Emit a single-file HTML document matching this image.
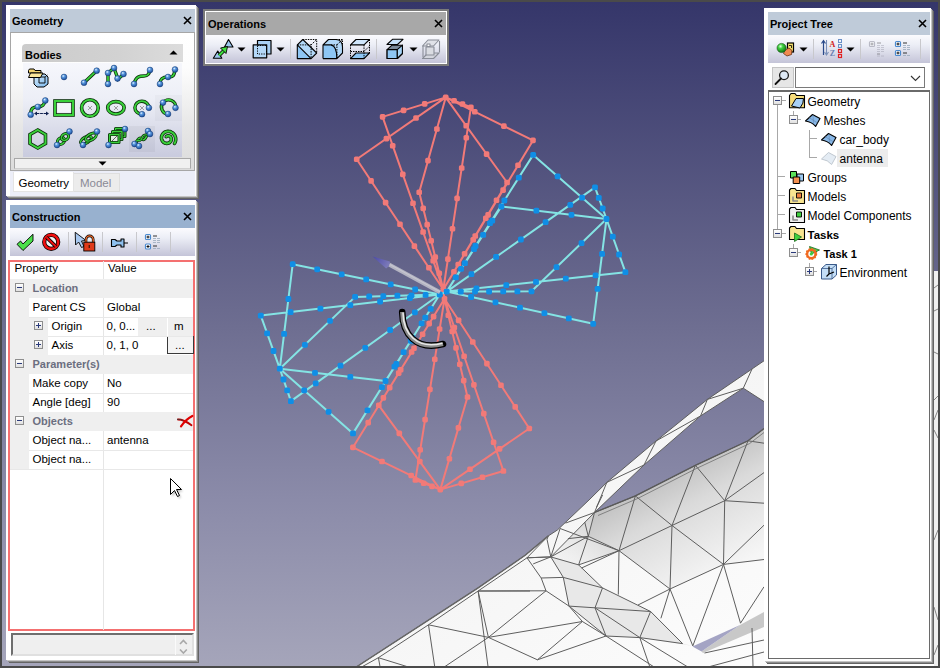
<!DOCTYPE html>
<html><head><meta charset="utf-8">
<style>
*{box-sizing:border-box;margin:0;padding:0}
html,body{width:940px;height:668px;overflow:hidden;background:#4a4a4a;font-family:"Liberation Sans",sans-serif;color:#000}
.abs{position:absolute}
#vp{position:absolute;left:2px;top:2px;width:936px;height:664px;background:linear-gradient(#35366a 0%,#6e6e91 49%,#8b8ba9 75%,#a5a5ba 100%);overflow:hidden}
.panel{position:absolute;background:#fff;box-shadow:1px 1px 0 #c4c4c4,2px 2px 0 #8c8c8c,3px 3px 0 #646464}
.title{position:absolute;font-weight:bold;font-size:11px;line-height:23px;padding-left:2px;padding-top:1px}
.close{position:absolute;width:9px;height:9px}
.tb{position:absolute;background:linear-gradient(#fbfbfe 0%,#eceef6 35%,#c4c4d8 100%)}
.sep{position:absolute;width:1px;background:#c8c8cc}
.dd{position:absolute;width:0;height:0;border-left:4px solid transparent;border-right:4px solid transparent;border-top:4px solid #000}
.t12{font-size:12px}
.tr{position:absolute;font-size:12px;line-height:14px;white-space:nowrap}
.tt{position:absolute;font-size:11.5px;line-height:14px;white-space:nowrap}
.tb2{position:absolute;font-size:11px;line-height:14px;font-weight:bold;color:#6b6e80;white-space:nowrap}
.bx{width:9px;height:9px;border:1px solid #8e8e8e;background:linear-gradient(#fff,#e0e0e0)}
.bx::after{content:"";position:absolute;left:1px;top:3px;width:5px;height:1px;background:#2a3a7a}
.plus::before{content:"";position:absolute;left:3px;top:1px;width:1px;height:5px;background:#2a3a7a}

</style></head><body>
<div id="vp">
<svg id="scene" class="abs" style="left:-2px;top:-2px" width="940" height="668" viewBox="0 0 940 668">
<!--SCENE-->
<defs><linearGradient id="mg" x1="0" y1="0" x2="1" y2="1"><stop offset="0" stop-color="#ececec"/><stop offset="0.5" stop-color="#f6f6f6"/><stop offset="1" stop-color="#ffffff"/></linearGradient><linearGradient id="bgc" gradientUnits="userSpaceOnUse" x1="0" y1="2" x2="0" y2="666"><stop offset="0" stop-color="#35366a"/><stop offset="0.49" stop-color="#6e6e91"/><stop offset="0.75" stop-color="#8b8ba9"/><stop offset="1" stop-color="#a5a5ba"/></linearGradient></defs>
<polygon points="357.0,666.5 478.5,587.6 525.5,555.0 548.3,535.9 557.4,530.0 589.0,500.0 606.8,482.4 656.0,441.0 707.4,399.4 764.0,360.8 938.0,271.0 938.0,666.5" fill="url(#mg)"/>
<polygon points="550.8,556.9 578.6,564.9 602.5,587.9 650.6,611.5 682.6,643.6 692.8,645.9 639.8,637.6 606.0,636.0 569.0,606.1 563.3,577.4" fill="#e8e8e8"/>
<defs><linearGradient id="topsh" gradientUnits="userSpaceOnUse" x1="680" y1="472" x2="731" y2="570"><stop offset="0" stop-color="#c4c4c4"/><stop offset="0.3" stop-color="#dadada"/><stop offset="1" stop-color="#f6f6f6"/></linearGradient><linearGradient id="jsh" gradientUnits="userSpaceOnUse" x1="594" y1="514" x2="560" y2="560"><stop offset="0" stop-color="#d0d0d0"/><stop offset="1" stop-color="#e8e8e8" stop-opacity="0.3"/></linearGradient></defs>
<polygon points="594.5,512.5 635.4,495.9 695.4,465.3 748,440.8 764,428.6 764,559.5 723.5,564.4 670,589 619,550.7 588.3,536.3" fill="url(#topsh)"/>
<polygon points="594.5,512.5 588.3,536.3 619,550.7 578.6,564.9 550.8,556.9" fill="url(#jsh)"/>
<rect x="934" y="271" width="4" height="396" fill="#f0f0f0"/>
<polygon points="594.5,512.5 644.0,465.0 700.6,415.9 743.3,388.2 764.0,401.6 764.0,428.6 748.0,440.8 695.4,465.3 635.4,495.9" fill="url(#bgc)"/>
<polygon points="701.5,651.5 740,625 764,612 764,627 703,653" fill="#c8c8c8"/>
<polygon points="692.5,646.5 740,625 701.5,651.5" fill="#a4a4c4"/>
<path d="M362.5,666.5 L378.4,657.7 L428.5,624.8 L478.1,591.0 L527.0,557.8 L548.3,535.9 L557.4,530.0 L589.0,500.0 L606.8,482.4 L656.0,441.0 L707.4,399.4 L764.0,360.8 M357.0,666.5 L478.5,587.6 L525.5,555.0 L548.3,535.9 M594.5,512.5 L644.0,465.0 L700.6,415.9 L743.3,388.2 L764.0,401.6 M764.0,428.6 L748.0,440.8 L695.4,465.3 L635.4,495.9 L594.5,512.5 M478.1,591.0 L530.0,591.0 M478.1,591.0 L488.4,637.4 M428.5,624.8 L488.4,637.4 M428.5,624.8 L434.7,666.5 M488.4,637.4 L445.0,666.5 M488.4,637.4 L546.0,590.8 M488.4,637.4 L582.4,621.5 M488.4,637.4 L537.4,659.8 M378.4,657.7 L380.0,666.5 M378.4,657.7 L406.8,666.5 M527.0,557.8 L550.8,556.9 L578.6,564.9 L602.5,587.9 L650.6,611.5 L682.6,643.6 M527.0,557.8 L541.2,578.0 L546.0,590.8 L569.0,606.1 L606.0,636.0 L653.3,666.5 M541.2,578.0 L563.3,577.4 L550.8,556.9 M563.3,577.4 L569.0,606.1 M563.3,577.4 L602.5,587.9 M569.0,606.1 L595.0,607.8 L650.6,611.5 M602.5,587.9 L595.0,607.8 L606.0,636.0 M595.0,607.8 L639.8,637.6 L606.0,636.0 M650.6,611.5 L639.8,637.6 L682.6,643.6 M639.8,637.6 L649.7,666.5 M639.8,637.6 L687.0,666.5 M478.1,591.0 L546.0,590.8 M582.4,621.5 L606.0,636.0 M582.4,621.5 L537.4,659.8 M582.4,621.5 L569.0,606.1 M635.4,495.9 L672.0,525.5 L695.4,465.3 L724.7,500.7 L748.0,440.8 M672.0,525.5 L724.7,500.7 M635.4,495.9 L619.0,550.7 L672.0,525.5 M619.0,550.7 L618.3,594.6 M619.0,550.7 L581.6,568.0 M619.0,550.7 L560.1,528.5 M672.0,525.5 L670.0,589.0 M672.0,525.5 L723.5,564.4 L724.7,500.7 M724.7,500.7 L764.0,472.6 M724.7,500.7 L764.0,503.2 M723.5,564.4 L764.0,525.2 M723.5,564.4 L764.0,559.5 M670.0,589.0 L723.5,564.4 M670.0,589.0 L692.8,645.9 L723.5,564.4 M723.5,564.4 L740.5,623.2 M670.0,589.0 L660.9,618.3 M670.0,589.0 L638.0,605.0 M619.0,550.7 L670.0,589.0 M740.5,623.2 L764.0,586.8 M560.1,528.5 L550.8,556.9 M594.5,512.5 L550.8,556.9 M594.5,512.5 L565.5,523.1 M594.5,512.5 L588.3,536.3 L619.0,550.7 M584.7,522.0 L588.3,536.3 M567.9,538.7 L588.3,536.3 M550.8,556.9 L588.3,536.3 M588.3,536.3 L578.6,564.9 M578.6,564.9 L619.0,550.7 M547.0,539.3 L550.8,556.9 M527.0,557.8 L550.8,556.9 M533.2,563.9 L550.8,556.9 M548.3,535.9 L547.0,539.3 M596.6,507.0 L602.6,495.0 M606.8,482.4 L594.5,512.5 M606.8,482.4 L644.0,465.0 M656.0,441.0 L644.0,465.0 M656.0,441.0 L700.6,415.9 M707.4,399.4 L700.6,415.9 M707.4,399.4 L743.3,388.2 M752.0,369.0 L743.3,388.2 M748.0,440.8 L764.0,443.2 M704.5,653.0 L764.0,640.0 M752.0,628.0 L753.0,666.5 M710.0,666.5 L764.0,652.0 M478.1,591.0 L488.0,666.5 M537.4,659.8 L606.0,636.0" fill="none" stroke="#5e5e5e" stroke-width="1" stroke-linejoin="round"/>
<path d="M357,666.5 L478.5,587.6 L525.5,555 L548.3,535.9" fill="none" stroke="#666" stroke-width="1.4"/>
<path d="M594.5,512.5 L635.4,495.9 L695.4,465.3 L748,440.8 L764,428.6" fill="none" stroke="#5a5a5a" stroke-width="1.3"/>
<path d="M598,515.5 L637,498.8 L697,468.2 L749.5,443.6 L764,432.5" fill="none" stroke="#707070" stroke-width="0.8"/>
<path d="M934,288 L938,285 M934,311 L938,309 M934,352 L938,354 M934,400 L938,396 M934,420 L938,410 M934,430 L938,438 M934,540 L938,530 M934,607 L938,620 M934,655 L938,645" stroke="#6a6a6a" stroke-width="0.8"/>
<path d="M445.7,97.4 L356.7,159.2 L443.3,289.5 M445.7,97.4 L382.6,116.9 L443.3,289.5 M445.7,97.4 L533.0,140.4 L443.3,289.5 M445.7,97.4 L507.1,182.5 L443.3,289.5 M445.7,97.4 L419.2,192.2 L443.3,289.5 M445.7,97.4 L470.9,107.3 L443.3,289.5 M440.3,489.6 L352.9,447.4 L444.5,298.8 M440.3,489.6 L378.8,405.3 L444.5,298.8 M440.3,489.6 L529.3,428.5 L444.5,298.8 M440.3,489.6 L503.4,471.0 L444.5,298.8 M440.3,489.6 L415.4,480.0 L444.5,298.8 M440.3,489.6 L467.5,397.0 L444.5,298.8 M443.3,289.5 L444.5,298.8" fill="none" stroke="#f27a78" stroke-width="2" stroke-linejoin="round"/>
<g fill="#f27a78"><rect x="442.9" y="94.6" width="5.6" height="5.6" rx="1.6"/><rect x="440.5" y="286.7" width="5.6" height="5.6" rx="1.6"/><rect x="353.9" y="156.4" width="5.6" height="5.6" rx="1.6"/><rect x="383.6" y="135.8" width="5.6" height="5.6" rx="1.6"/><rect x="413.2" y="115.2" width="5.6" height="5.6" rx="1.6"/><rect x="368.3" y="178.1" width="5.6" height="5.6" rx="1.6"/><rect x="382.8" y="199.8" width="5.6" height="5.6" rx="1.6"/><rect x="397.2" y="221.5" width="5.6" height="5.6" rx="1.6"/><rect x="411.6" y="243.3" width="5.6" height="5.6" rx="1.6"/><rect x="426.1" y="265.0" width="5.6" height="5.6" rx="1.6"/><rect x="379.8" y="114.1" width="5.6" height="5.6" rx="1.6"/><rect x="400.8" y="107.6" width="5.6" height="5.6" rx="1.6"/><rect x="421.9" y="101.1" width="5.6" height="5.6" rx="1.6"/><rect x="389.9" y="142.9" width="5.6" height="5.6" rx="1.6"/><rect x="400.0" y="171.6" width="5.6" height="5.6" rx="1.6"/><rect x="410.2" y="200.4" width="5.6" height="5.6" rx="1.6"/><rect x="420.3" y="229.2" width="5.6" height="5.6" rx="1.6"/><rect x="430.4" y="257.9" width="5.6" height="5.6" rx="1.6"/><rect x="530.2" y="137.6" width="5.6" height="5.6" rx="1.6"/><rect x="501.1" y="123.3" width="5.6" height="5.6" rx="1.6"/><rect x="472.0" y="108.9" width="5.6" height="5.6" rx="1.6"/><rect x="515.2" y="162.4" width="5.6" height="5.6" rx="1.6"/><rect x="500.3" y="187.3" width="5.6" height="5.6" rx="1.6"/><rect x="485.3" y="212.1" width="5.6" height="5.6" rx="1.6"/><rect x="470.4" y="237.0" width="5.6" height="5.6" rx="1.6"/><rect x="455.4" y="261.8" width="5.6" height="5.6" rx="1.6"/><rect x="504.3" y="179.7" width="5.6" height="5.6" rx="1.6"/><rect x="483.8" y="151.3" width="5.6" height="5.6" rx="1.6"/><rect x="463.4" y="123.0" width="5.6" height="5.6" rx="1.6"/><rect x="493.7" y="197.5" width="5.6" height="5.6" rx="1.6"/><rect x="483.0" y="215.4" width="5.6" height="5.6" rx="1.6"/><rect x="472.4" y="233.2" width="5.6" height="5.6" rx="1.6"/><rect x="461.8" y="251.0" width="5.6" height="5.6" rx="1.6"/><rect x="451.1" y="268.9" width="5.6" height="5.6" rx="1.6"/><rect x="416.4" y="189.4" width="5.6" height="5.6" rx="1.6"/><rect x="425.2" y="157.8" width="5.6" height="5.6" rx="1.6"/><rect x="434.1" y="126.2" width="5.6" height="5.6" rx="1.6"/><rect x="420.4" y="205.6" width="5.6" height="5.6" rx="1.6"/><rect x="424.4" y="221.8" width="5.6" height="5.6" rx="1.6"/><rect x="428.4" y="238.0" width="5.6" height="5.6" rx="1.6"/><rect x="432.5" y="254.3" width="5.6" height="5.6" rx="1.6"/><rect x="436.5" y="270.5" width="5.6" height="5.6" rx="1.6"/><rect x="468.1" y="104.5" width="5.6" height="5.6" rx="1.6"/><rect x="459.7" y="101.2" width="5.6" height="5.6" rx="1.6"/><rect x="451.3" y="97.9" width="5.6" height="5.6" rx="1.6"/><rect x="463.5" y="134.9" width="5.6" height="5.6" rx="1.6"/><rect x="458.9" y="165.2" width="5.6" height="5.6" rx="1.6"/><rect x="454.3" y="195.6" width="5.6" height="5.6" rx="1.6"/><rect x="449.7" y="226.0" width="5.6" height="5.6" rx="1.6"/><rect x="445.1" y="256.3" width="5.6" height="5.6" rx="1.6"/><rect x="437.5" y="486.8" width="5.6" height="5.6" rx="1.6"/><rect x="441.7" y="296.0" width="5.6" height="5.6" rx="1.6"/><rect x="350.1" y="444.6" width="5.6" height="5.6" rx="1.6"/><rect x="379.2" y="458.7" width="5.6" height="5.6" rx="1.6"/><rect x="408.4" y="472.7" width="5.6" height="5.6" rx="1.6"/><rect x="365.4" y="419.8" width="5.6" height="5.6" rx="1.6"/><rect x="380.6" y="395.1" width="5.6" height="5.6" rx="1.6"/><rect x="395.9" y="370.3" width="5.6" height="5.6" rx="1.6"/><rect x="411.2" y="345.5" width="5.6" height="5.6" rx="1.6"/><rect x="426.4" y="320.8" width="5.6" height="5.6" rx="1.6"/><rect x="376.0" y="402.5" width="5.6" height="5.6" rx="1.6"/><rect x="396.5" y="430.6" width="5.6" height="5.6" rx="1.6"/><rect x="417.0" y="458.7" width="5.6" height="5.6" rx="1.6"/><rect x="386.9" y="384.8" width="5.6" height="5.6" rx="1.6"/><rect x="397.9" y="367.0" width="5.6" height="5.6" rx="1.6"/><rect x="408.8" y="349.2" width="5.6" height="5.6" rx="1.6"/><rect x="419.8" y="331.5" width="5.6" height="5.6" rx="1.6"/><rect x="430.8" y="313.8" width="5.6" height="5.6" rx="1.6"/><rect x="526.5" y="425.7" width="5.6" height="5.6" rx="1.6"/><rect x="496.8" y="446.1" width="5.6" height="5.6" rx="1.6"/><rect x="467.2" y="466.4" width="5.6" height="5.6" rx="1.6"/><rect x="512.4" y="404.1" width="5.6" height="5.6" rx="1.6"/><rect x="498.2" y="382.5" width="5.6" height="5.6" rx="1.6"/><rect x="484.1" y="360.8" width="5.6" height="5.6" rx="1.6"/><rect x="470.0" y="339.2" width="5.6" height="5.6" rx="1.6"/><rect x="455.8" y="317.6" width="5.6" height="5.6" rx="1.6"/><rect x="500.6" y="468.2" width="5.6" height="5.6" rx="1.6"/><rect x="479.6" y="474.4" width="5.6" height="5.6" rx="1.6"/><rect x="458.5" y="480.6" width="5.6" height="5.6" rx="1.6"/><rect x="490.8" y="439.5" width="5.6" height="5.6" rx="1.6"/><rect x="481.0" y="410.8" width="5.6" height="5.6" rx="1.6"/><rect x="471.1" y="382.1" width="5.6" height="5.6" rx="1.6"/><rect x="461.3" y="353.4" width="5.6" height="5.6" rx="1.6"/><rect x="451.5" y="324.7" width="5.6" height="5.6" rx="1.6"/><rect x="412.6" y="477.2" width="5.6" height="5.6" rx="1.6"/><rect x="420.9" y="480.4" width="5.6" height="5.6" rx="1.6"/><rect x="429.2" y="483.6" width="5.6" height="5.6" rx="1.6"/><rect x="417.4" y="447.0" width="5.6" height="5.6" rx="1.6"/><rect x="422.3" y="416.8" width="5.6" height="5.6" rx="1.6"/><rect x="427.1" y="386.6" width="5.6" height="5.6" rx="1.6"/><rect x="432.0" y="356.4" width="5.6" height="5.6" rx="1.6"/><rect x="436.8" y="326.2" width="5.6" height="5.6" rx="1.6"/><rect x="464.7" y="394.2" width="5.6" height="5.6" rx="1.6"/><rect x="455.6" y="425.1" width="5.6" height="5.6" rx="1.6"/><rect x="446.6" y="455.9" width="5.6" height="5.6" rx="1.6"/><rect x="460.9" y="377.8" width="5.6" height="5.6" rx="1.6"/><rect x="457.0" y="361.5" width="5.6" height="5.6" rx="1.6"/><rect x="453.2" y="345.1" width="5.6" height="5.6" rx="1.6"/><rect x="449.4" y="328.7" width="5.6" height="5.6" rx="1.6"/><rect x="445.5" y="312.4" width="5.6" height="5.6" rx="1.6"/></g>
<path d="M279.8,368.7 L292.7,264.2 L439.7,294.5 M279.8,368.7 L260.8,315.6 L439.7,294.5 M279.8,368.7 L355.1,296.9 L439.7,294.5 M279.8,368.7 L385.5,381.0 L439.7,294.5 M279.8,368.7 L290.9,401.1 L439.7,294.5 M279.8,368.7 L353.0,433.4 L439.7,294.5 M606.5,219.0 L533.2,154.9 L446.7,291.6 M606.5,219.0 L595.0,187.4 L446.7,291.6 M606.5,219.0 L501.4,206.5 L446.7,291.6 M606.5,219.0 L625.4,272.2 L446.7,291.6 M606.5,219.0 L593.2,323.8 L446.7,291.6 M606.5,219.0 L531.5,291.3 L446.7,291.6 M439.7,294.5 L446.7,291.6" fill="none" stroke="#84e4e4" stroke-width="2" stroke-linejoin="round"/>
<g fill="#0f8ee6"><rect x="276.9" y="365.8" width="5.8" height="5.8" rx="1.6"/><rect x="436.8" y="291.6" width="5.8" height="5.8" rx="1.6"/><rect x="289.8" y="261.3" width="5.8" height="5.8" rx="1.6"/><rect x="285.5" y="296.1" width="5.8" height="5.8" rx="1.6"/><rect x="281.2" y="331.0" width="5.8" height="5.8" rx="1.6"/><rect x="314.3" y="266.4" width="5.8" height="5.8" rx="1.6"/><rect x="338.8" y="271.4" width="5.8" height="5.8" rx="1.6"/><rect x="363.3" y="276.5" width="5.8" height="5.8" rx="1.6"/><rect x="387.8" y="281.5" width="5.8" height="5.8" rx="1.6"/><rect x="412.3" y="286.6" width="5.8" height="5.8" rx="1.6"/><rect x="257.9" y="312.7" width="5.8" height="5.8" rx="1.6"/><rect x="264.2" y="330.4" width="5.8" height="5.8" rx="1.6"/><rect x="270.6" y="348.1" width="5.8" height="5.8" rx="1.6"/><rect x="287.7" y="309.2" width="5.8" height="5.8" rx="1.6"/><rect x="317.5" y="305.7" width="5.8" height="5.8" rx="1.6"/><rect x="347.4" y="302.2" width="5.8" height="5.8" rx="1.6"/><rect x="377.2" y="298.6" width="5.8" height="5.8" rx="1.6"/><rect x="407.0" y="295.1" width="5.8" height="5.8" rx="1.6"/><rect x="352.2" y="294.0" width="5.8" height="5.8" rx="1.6"/><rect x="327.1" y="317.9" width="5.8" height="5.8" rx="1.6"/><rect x="302.0" y="341.9" width="5.8" height="5.8" rx="1.6"/><rect x="366.3" y="293.6" width="5.8" height="5.8" rx="1.6"/><rect x="380.4" y="293.2" width="5.8" height="5.8" rx="1.6"/><rect x="394.5" y="292.8" width="5.8" height="5.8" rx="1.6"/><rect x="408.6" y="292.4" width="5.8" height="5.8" rx="1.6"/><rect x="422.7" y="292.0" width="5.8" height="5.8" rx="1.6"/><rect x="382.6" y="378.1" width="5.8" height="5.8" rx="1.6"/><rect x="347.4" y="374.0" width="5.8" height="5.8" rx="1.6"/><rect x="312.1" y="369.9" width="5.8" height="5.8" rx="1.6"/><rect x="391.6" y="363.7" width="5.8" height="5.8" rx="1.6"/><rect x="400.7" y="349.3" width="5.8" height="5.8" rx="1.6"/><rect x="409.7" y="334.9" width="5.8" height="5.8" rx="1.6"/><rect x="418.7" y="320.4" width="5.8" height="5.8" rx="1.6"/><rect x="427.8" y="306.0" width="5.8" height="5.8" rx="1.6"/><rect x="288.0" y="398.2" width="5.8" height="5.8" rx="1.6"/><rect x="284.3" y="387.4" width="5.8" height="5.8" rx="1.6"/><rect x="280.6" y="376.6" width="5.8" height="5.8" rx="1.6"/><rect x="312.8" y="380.4" width="5.8" height="5.8" rx="1.6"/><rect x="337.6" y="362.7" width="5.8" height="5.8" rx="1.6"/><rect x="362.4" y="344.9" width="5.8" height="5.8" rx="1.6"/><rect x="387.2" y="327.1" width="5.8" height="5.8" rx="1.6"/><rect x="412.0" y="309.4" width="5.8" height="5.8" rx="1.6"/><rect x="350.1" y="430.5" width="5.8" height="5.8" rx="1.6"/><rect x="325.7" y="408.9" width="5.8" height="5.8" rx="1.6"/><rect x="301.3" y="387.4" width="5.8" height="5.8" rx="1.6"/><rect x="364.6" y="407.4" width="5.8" height="5.8" rx="1.6"/><rect x="379.0" y="384.2" width="5.8" height="5.8" rx="1.6"/><rect x="393.5" y="361.1" width="5.8" height="5.8" rx="1.6"/><rect x="407.9" y="337.9" width="5.8" height="5.8" rx="1.6"/><rect x="422.4" y="314.8" width="5.8" height="5.8" rx="1.6"/><rect x="603.6" y="216.1" width="5.8" height="5.8" rx="1.6"/><rect x="443.8" y="288.7" width="5.8" height="5.8" rx="1.6"/><rect x="530.3" y="152.0" width="5.8" height="5.8" rx="1.6"/><rect x="554.7" y="173.4" width="5.8" height="5.8" rx="1.6"/><rect x="579.2" y="194.7" width="5.8" height="5.8" rx="1.6"/><rect x="515.9" y="174.8" width="5.8" height="5.8" rx="1.6"/><rect x="501.5" y="197.6" width="5.8" height="5.8" rx="1.6"/><rect x="487.1" y="220.3" width="5.8" height="5.8" rx="1.6"/><rect x="472.6" y="243.1" width="5.8" height="5.8" rx="1.6"/><rect x="458.2" y="265.9" width="5.8" height="5.8" rx="1.6"/><rect x="592.1" y="184.5" width="5.8" height="5.8" rx="1.6"/><rect x="595.9" y="195.0" width="5.8" height="5.8" rx="1.6"/><rect x="599.8" y="205.6" width="5.8" height="5.8" rx="1.6"/><rect x="567.4" y="201.9" width="5.8" height="5.8" rx="1.6"/><rect x="542.7" y="219.2" width="5.8" height="5.8" rx="1.6"/><rect x="518.0" y="236.6" width="5.8" height="5.8" rx="1.6"/><rect x="493.2" y="254.0" width="5.8" height="5.8" rx="1.6"/><rect x="468.5" y="271.3" width="5.8" height="5.8" rx="1.6"/><rect x="498.5" y="203.6" width="5.8" height="5.8" rx="1.6"/><rect x="533.5" y="207.8" width="5.8" height="5.8" rx="1.6"/><rect x="568.6" y="211.9" width="5.8" height="5.8" rx="1.6"/><rect x="489.4" y="217.8" width="5.8" height="5.8" rx="1.6"/><rect x="480.3" y="232.0" width="5.8" height="5.8" rx="1.6"/><rect x="471.1" y="246.2" width="5.8" height="5.8" rx="1.6"/><rect x="462.0" y="260.3" width="5.8" height="5.8" rx="1.6"/><rect x="452.9" y="274.5" width="5.8" height="5.8" rx="1.6"/><rect x="622.5" y="269.3" width="5.8" height="5.8" rx="1.6"/><rect x="616.2" y="251.6" width="5.8" height="5.8" rx="1.6"/><rect x="609.9" y="233.8" width="5.8" height="5.8" rx="1.6"/><rect x="592.7" y="272.5" width="5.8" height="5.8" rx="1.6"/><rect x="562.9" y="275.8" width="5.8" height="5.8" rx="1.6"/><rect x="533.1" y="279.0" width="5.8" height="5.8" rx="1.6"/><rect x="503.4" y="282.2" width="5.8" height="5.8" rx="1.6"/><rect x="473.6" y="285.5" width="5.8" height="5.8" rx="1.6"/><rect x="590.3" y="320.9" width="5.8" height="5.8" rx="1.6"/><rect x="594.7" y="286.0" width="5.8" height="5.8" rx="1.6"/><rect x="599.2" y="251.0" width="5.8" height="5.8" rx="1.6"/><rect x="565.9" y="315.5" width="5.8" height="5.8" rx="1.6"/><rect x="541.5" y="310.2" width="5.8" height="5.8" rx="1.6"/><rect x="517.1" y="304.8" width="5.8" height="5.8" rx="1.6"/><rect x="492.6" y="299.4" width="5.8" height="5.8" rx="1.6"/><rect x="468.2" y="294.1" width="5.8" height="5.8" rx="1.6"/><rect x="528.6" y="288.4" width="5.8" height="5.8" rx="1.6"/><rect x="553.6" y="264.3" width="5.8" height="5.8" rx="1.6"/><rect x="578.6" y="240.2" width="5.8" height="5.8" rx="1.6"/><rect x="514.5" y="288.5" width="5.8" height="5.8" rx="1.6"/><rect x="500.3" y="288.5" width="5.8" height="5.8" rx="1.6"/><rect x="486.2" y="288.6" width="5.8" height="5.8" rx="1.6"/><rect x="472.1" y="288.6" width="5.8" height="5.8" rx="1.6"/><rect x="457.9" y="288.7" width="5.8" height="5.8" rx="1.6"/></g>
<defs><linearGradient id="cone" x1="0" y1="0" x2="1" y2="0.4"><stop offset="0" stop-color="#4a48a8"/><stop offset="1" stop-color="#7a78b8"/></linearGradient></defs>
<path d="M389 264.5L440 292.3" stroke="#b4b4c2" stroke-width="4" stroke-linecap="butt"/>
<path d="M389 264L440 291.8" stroke="#c6c6d0" stroke-width="1.2"/>
<path d="M372.7 256.5L389.9 261.4Q390.5 265 386.1 268.6Z" fill="url(#cone)"/>
<path d="M402.2 312C402.5 334 416 351 443 344" fill="none" stroke="#000" stroke-width="6.6" stroke-linecap="round"/>
<path d="M402.2 312C402.5 334 416 351 443 344" fill="none" stroke="#8a8a8a" stroke-width="4.2" stroke-linecap="butt"/>
<path d="M403 312.5C403.3 333.5 416.5 350 442.5 343.2" fill="none" stroke="#e8e8e8" stroke-width="1.6" stroke-linecap="butt"/>
<!--/SCENE-->
</svg>
</div>

<!-- Geometry panel -->
<div class="panel" style="left:6px;top:5px;width:190px;height:191px">
  <div class="abs" style="left:4px;top:4px;width:185px;height:23px;background:#bfcbd9"></div>
  <div class="title" style="left:4px;top:4px">Geometry</div>
  <svg class="close" style="left:177px;top:11px" viewBox="0 0 9 9"><path d="M1 1L8 8M8 1L1 8" stroke="#000" stroke-width="1.6"/></svg>
  <div class="abs" style="left:4px;top:27px;width:185px;height:139px;border:1px solid #a6a6a6;border-bottom:2px solid #a6a6a6;background:#fff"></div>
</div>

<!-- Geometry panel content -->
<div class="abs" style="left:11px;top:33px;width:183px;height:137px;background:linear-gradient(#fff 0%,#fdfdfd 25%,#e6e6e6 70%,#dcdcdc 100%)"></div>
<div class="abs" style="left:22px;top:44px;width:161px;height:18px;background:linear-gradient(90deg,#cbcbcb,#d2d2d2 60%,#dcdcdc);border-top-left-radius:4px"></div>
<div class="abs" style="left:25px;top:50.3px;font-weight:bold;font-size:11px;line-height:11px">Bodies</div>
<svg class="abs" style="left:169px;top:50px" width="9" height="5"><path d="M0.5 4.5L4.5 0.5L8.5 4.5Z" fill="#000"/></svg>
<div class="abs" style="left:23px;top:63px;width:159px;height:94px;background:linear-gradient(#f6f7fc 0%,#eceef6 40%,#c9cbde 100%)"></div>
<div class="abs" style="left:155px;top:95px;width:27px;height:26px;background:rgba(0,0,0,0.025)"></div>
<div class="abs" style="left:129px;top:126px;width:26px;height:26px;background:rgba(0,0,0,0.04)"></div>
<div class="abs" style="left:14px;top:158px;width:177px;height:11px;border:1px solid #a8a8a8;border-bottom-color:#d0d0d0;background:#f0f0f0"></div>
<svg class="abs" style="left:98px;top:161px" width="9" height="5"><path d="M0.5 0.5L4.5 4.5L8.5 0.5Z" fill="#000"/></svg>
<div class="abs" style="left:10px;top:171px;width:185px;height:25px;background:#eceef8"></div>
<div class="abs" style="left:74px;top:173px;width:46px;height:19px;background:#ececec;border:1px solid #dedede;border-left:none"></div>
<div class="abs" style="left:13px;top:172px;width:61px;height:20px;background:#fff;border:1px solid #e4e4e4;border-top:none"></div>
<div class="abs" style="left:18.5px;top:177.5px;font-size:11.5px;line-height:11.5px">Geometry</div>
<div class="abs" style="left:80px;top:177.5px;font-size:11.5px;line-height:11.5px;color:#8a8a96">Model</div>

<!-- Construction panel -->
<div class="panel" style="left:6px;top:200px;width:190px;height:460px">
  <div class="abs" style="left:4px;top:5px;width:185px;height:23px;background:#98b1cf"></div>
  <div class="title" style="left:4px;top:5px;line-height:22px">Construction</div>
  <svg class="close" style="left:177px;top:12px" viewBox="0 0 9 9"><path d="M1 1L8 8M8 1L1 8" stroke="#000" stroke-width="1.6"/></svg>
  <div class="tb" style="left:4px;top:28px;width:185px;height:28px"></div>
  <div class="abs" style="left:2px;top:60px;width:187px;height:371px;border:2px solid #f47070;background:#fff"></div>
  <div class="abs" style="left:5px;top:433px;width:183px;height:23px;border:2px solid #6e6e6e;border-right-color:#e0e0e0;border-bottom-color:#e0e0e0;background:#efefef"></div>
</div>

<!-- Construction content -->
<div class="sep" style="left:68px;top:232px;height:20px"></div>
<div class="sep" style="left:102px;top:232px;height:20px"></div>
<div class="sep" style="left:136px;top:232px;height:20px"></div>
<div class="sep" style="left:170px;top:232px;height:20px"></div>
<!-- table -->
<div class="abs" style="left:102.5px;top:261px;width:1px;height:369px;background:#e6e6e6"></div>
<div class="abs" style="left:10px;top:279px;width:183px;height:19px;background:#efefef"></div>
<div class="abs" style="left:10px;top:298px;width:19px;height:57px;background:#efefef"></div>
<div class="abs" style="left:29px;top:317px;width:19px;height:38px;background:#efefef"></div>
<div class="abs" style="left:10px;top:355px;width:183px;height:19px;background:#efefef"></div>
<div class="abs" style="left:10px;top:374px;width:19px;height:38px;background:#efefef"></div>
<div class="abs" style="left:10px;top:412px;width:183px;height:19px;background:#efefef"></div>
<div class="abs" style="left:10px;top:431px;width:19px;height:38px;background:#efefef"></div>
<div class="abs" style="left:138px;top:317px;width:29px;height:19px;background:#efefef"></div>
<div class="abs" style="left:167px;top:317px;width:26px;height:19px;background:#efefef;border-left:1px solid #fff"></div>
<div class="abs" style="left:167px;top:336px;width:27px;height:18px;border:1px solid #3a3a3a;background:#f4f4f4"></div>
<!-- grid lines -->
<div class="abs" style="left:29px;top:316.5px;width:164px;height:1px;background:#e8e8e8"></div>
<div class="abs" style="left:48px;top:335.5px;width:145px;height:1px;background:#e8e8e8"></div>
<div class="abs" style="left:29px;top:392.5px;width:164px;height:1px;background:#e8e8e8"></div>
<div class="abs" style="left:29px;top:449.5px;width:164px;height:1px;background:#e8e8e8"></div>
<div class="abs" style="left:10px;top:468.5px;width:183px;height:1px;background:#e8e8e8"></div>
<!-- expand boxes -->
<div class="abs bx" style="left:15px;top:283px"></div>
<div class="abs bx" style="left:15px;top:359px"></div>
<div class="abs bx" style="left:15px;top:416px"></div>
<div class="abs bx plus" style="left:34px;top:321px"></div>
<div class="abs bx plus" style="left:34px;top:340px"></div>
<div class="tt" style="left:14.5px;top:260.5px">Property</div>
<div class="tt" style="left:108px;top:260.5px">Value</div>
<div class="tb2" style="left:32.5px;top:280.8px">Location</div>
<div class="tt" style="left:32.5px;top:299.5px">Parent CS</div>
<div class="tt" style="left:107px;top:299.5px">Global</div>
<div class="tt" style="left:51.5px;top:318.5px">Origin</div>
<div class="tt" style="left:106.5px;top:318.5px">0, 0...</div>
<div class="tt" style="left:146px;top:318.5px">...</div>
<div class="tt" style="left:174px;top:318.5px">m</div>
<div class="tt" style="left:51.5px;top:337.5px">Axis</div>
<div class="tt" style="left:106.5px;top:337.5px">0, 1, 0</div>
<div class="tt" style="left:175px;top:337.5px">...</div>
<div class="tb2" style="left:32.5px;top:356.8px">Parameter(s)</div>
<div class="tt" style="left:32.5px;top:375.5px">Make copy</div>
<div class="tt" style="left:107px;top:375.5px">No</div>
<div class="tt" style="left:32.5px;top:394.5px">Angle [deg]</div>
<div class="tt" style="left:107px;top:394.5px">90</div>
<div class="tb2" style="left:32.5px;top:413.8px">Objects</div>
<div class="tt" style="left:32.5px;top:432.5px">Object na...</div>
<div class="tt" style="left:107px;top:432.5px">antenna</div>
<div class="tt" style="left:32.5px;top:451.5px">Object na...</div>

<!-- Operations toolbar -->
<div class="abs" style="left:203px;top:9px;width:246px;height:57px;background:#7a7a7a">
  <div class="abs" style="left:2px;top:2px;width:242px;height:53px;background:#fff"></div>
  <div class="abs" style="left:3px;top:3px;width:240px;height:23px;background:#a8a8a8"></div>
  <div class="title" style="left:3px;top:3px">Operations</div>
  <svg class="close" style="left:231px;top:10px" viewBox="0 0 9 9"><path d="M1 1L8 8M8 1L1 8" stroke="#000" stroke-width="1.6"/></svg>
  <div class="tb" style="left:3px;top:26px;width:240px;height:28px"></div>
  <div class="sep" style="left:87px;top:30px;height:20px"></div>
  <div class="sep" style="left:173px;top:30px;height:20px"></div>
</div>

<!-- Project tree -->
<div class="panel" style="left:764px;top:8px;width:167px;height:653px">
  <div class="abs" style="left:4px;top:4px;width:162px;height:23px;background:#bfcbd9"></div>
  <div class="title" style="left:4px;top:4px">Project Tree</div>
  <svg class="close" style="left:154px;top:11px" viewBox="0 0 9 9"><path d="M1 1L8 8M8 1L1 8" stroke="#000" stroke-width="1.6"/></svg>
  <div class="tb" style="left:4px;top:27px;width:162px;height:28px"></div>
  <div class="sep" style="left:49px;top:31px;height:20px"></div>
  <div class="sep" style="left:96px;top:31px;height:20px"></div>
  <div class="sep" style="left:156px;top:31px;height:20px"></div>
  <div class="abs" style="left:8px;top:59px;width:22px;height:21px;background:#e6e6e6;border:1px solid #c4c4c4"></div>
  <div class="abs" style="left:31px;top:59px;width:130px;height:21px;background:#fff;border:1px solid #7a7a7a;border-top-color:#6a6a6a"></div>
  <div class="abs" style="left:4px;top:82px;width:162px;height:569px;border:1px solid #6a6a6a;border-top:2px solid #6a6a6a;background:#fff"></div>
</div>
<!-- tree -->
<div class="abs" style="left:837px;top:149px;width:51px;height:18px;background:#ececec"></div>
<div class="abs" style="left:777px;top:105px;width:1px;height:125px;background:#a8a8a8"></div>
<div class="abs" style="left:778px;top:176px;width:7px;height:1px;background:#a8a8a8"></div>
<div class="abs" style="left:778px;top:195px;width:7px;height:1px;background:#a8a8a8"></div>
<div class="abs" style="left:778px;top:214px;width:7px;height:1px;background:#a8a8a8"></div>
<div class="abs" style="left:782px;top:100px;width:4px;height:1px;background:#a8a8a8"></div>
<div class="abs" style="left:782px;top:233px;width:4px;height:1px;background:#a8a8a8"></div>
<div class="abs" style="left:793px;top:111px;width:1px;height:4px;background:#a8a8a8"></div>
<div class="abs" style="left:798px;top:119px;width:3px;height:1px;background:#a8a8a8"></div>
<div class="abs" style="left:809px;top:130px;width:1px;height:28px;background:#a8a8a8"></div>
<div class="abs" style="left:810px;top:138px;width:7px;height:1px;background:#a8a8a8"></div>
<div class="abs" style="left:810px;top:157px;width:7px;height:1px;background:#a8a8a8"></div>
<div class="abs" style="left:793px;top:244px;width:1px;height:4px;background:#a8a8a8"></div>
<div class="abs" style="left:798px;top:252px;width:3px;height:1px;background:#a8a8a8"></div>
<div class="abs" style="left:809px;top:263px;width:1px;height:4px;background:#a8a8a8"></div>
<div class="abs" style="left:814px;top:271px;width:3px;height:1px;background:#a8a8a8"></div>
<div class="abs bx" style="left:773px;top:96px"></div>
<div class="abs bx" style="left:789px;top:115px"></div>
<div class="abs bx" style="left:773px;top:229px"></div>
<div class="abs bx" style="left:789px;top:248px"></div>
<div class="abs bx plus" style="left:805px;top:267px"></div>
<div class="tr" style="left:807.5px;top:95px">Geometry</div>
<div class="tr" style="left:823.4px;top:114px">Meshes</div>
<div class="tr" style="left:839.6px;top:133px">car_body</div>
<div class="tr" style="left:839.6px;top:152px">antenna</div>
<div class="tr" style="left:807.5px;top:171px">Groups</div>
<div class="tr" style="left:807.5px;top:190px">Models</div>
<div class="tr" style="left:807.5px;top:209px">Model Components</div>
<div class="tr" style="left:807.5px;top:228px;font-weight:bold;font-size:11.5px">Tasks</div>
<div class="tr" style="left:823.4px;top:247px;font-weight:bold;font-size:11px">Task 1</div>
<div class="tr" style="left:839.6px;top:266px">Environment</div>

<!-- ICONS1 -->
<svg class="abs" style="left:0;top:0;pointer-events:none" width="940" height="668" viewBox="0 0 940 668">
<defs>
<radialGradient id="sph" cx="0.38" cy="0.32" r="0.7"><stop offset="0" stop-color="#e8f4ff"/><stop offset="0.35" stop-color="#5a9ae0"/><stop offset="1" stop-color="#1a4a9a"/></radialGradient>
<linearGradient id="lb" x1="0" y1="0" x2="1" y2="1"><stop offset="0" stop-color="#d8ecfc"/><stop offset="1" stop-color="#7ab8ee"/></linearGradient>
<radialGradient id="gsph" cx="0.38" cy="0.32" r="0.7"><stop offset="0" stop-color="#e0ffe0"/><stop offset="0.35" stop-color="#40d040"/><stop offset="1" stop-color="#107010"/></radialGradient>
<g id="s3"><circle r="2.9" fill="url(#sph)" stroke="#123870" stroke-width="0.5"/></g>
</defs>
<!-- construction toolbar icons -->
<path d="M17 244.3L20.5 241L23 244L33 234.2L33 241L23 250.5Z" fill="#4ae04a" stroke="#000" stroke-width="0.9" stroke-linejoin="round"/>
<circle cx="51.2" cy="241.9" r="7" fill="#f4f4f4" stroke="#000" stroke-width="4.2"/>
<circle cx="51.2" cy="241.9" r="7" fill="none" stroke="#f01010" stroke-width="2.6"/>
<path d="M46.5 237.2L55.9 246.6" stroke="#000" stroke-width="3.6"/><path d="M46.5 237.2L55.9 246.6" stroke="#f01010" stroke-width="2"/>
<path d="M75.2 232.3L75.6 245L78.6 242L81.5 247.5L84 246.5L81.5 241L86 240.5Z" fill="#a8c8f0" stroke="#000" stroke-width="0.9" stroke-linejoin="round"/>
<path d="M86 242.5V239.5A3.6 3.6 0 0 1 93.2 239.5V242.5" fill="none" stroke="#000" stroke-width="2.6"/><path d="M86 242.5V239.5A3.6 3.6 0 0 1 93.2 239.5V242.5" fill="none" stroke="#f06a2a" stroke-width="1.4"/>
<rect x="83.8" y="242.2" width="11" height="8.8" fill="#e03a1a" stroke="#000" stroke-width="0.9"/>
<rect x="88.6" y="245" width="1.4" height="3" fill="#5a1a0a"/>
<!-- pin -->
<path d="M111.5 239.5H115L117 241H121V239H124V247H121V245H117L115 246.5H111.5Z" fill="#8ec0ee" stroke="#000" stroke-width="1.1" stroke-linejoin="round"/>
<path d="M124 243H128" stroke="#000" stroke-width="1"/>
<!-- expand list -->
<g>
<rect x="145.5" y="234.5" width="5" height="5" rx="1" fill="#fff" stroke="#4a8ad0" stroke-width="1.2"/>
<rect x="145.5" y="244" width="5" height="5" rx="1" fill="#fff" stroke="#4a8ad0" stroke-width="1.2"/>
<path d="M146.5 237H149.5M148 235.5V238.5 M146.5 246.5H149.5M148 245V248" stroke="#000" stroke-width="0.9"/>
<path d="M153 236H157 M153 246H157" stroke="#333" stroke-width="1"/>
<path d="M153 238.5H156M157 238.5H160 M153 240.5H156M157 240.5H160 M153 242.5H156M157 242.5H160 M153 248.5H156M157 248.5H160" stroke="#9ab" stroke-width="0.8"/>
</g>

<!-- red x -->
<path d="M178 419.5Q184 419.5 191.5 425.3" fill="none" stroke="#c00000" stroke-width="1.8" stroke-linecap="round"/>
<path d="M181 426.3Q186 419 192.3 415.9" fill="none" stroke="#e00000" stroke-width="2.2" stroke-linecap="round"/>
<path d="M177 419.3Q181 419 183 420.5" fill="none" stroke="#5a2a2a" stroke-width="1"/>
<!-- cursor -->
<filter id="csh" x="-50%" y="-50%" width="200%" height="200%"><feGaussianBlur stdDeviation="1.2"/></filter>
<path d="M172 480.5V496.5L176 492.5L179 498.5L181 497.5L178 491.5H183Z" fill="#000" opacity="0.25" filter="url(#csh)"/>
<path d="M170.5 478.5V494.5L174.5 490.5L177.5 496.5L179.5 495.5L176.5 489.5H181.5Z" fill="#fff" stroke="#000" stroke-width="1" stroke-linejoin="round"/>

<!-- operations icons -->
<g stroke="#000" stroke-linejoin="round">
<path d="M217.8 51L213.3 58.3H221.8Z" fill="#9cc8f0" stroke-width="1.1"/>
<path d="M228.5 39.5L224.5 47H233Z" fill="#9cc8f0" stroke-width="1.1"/>
<path d="M219 55.5L224.5 50" stroke="#000" stroke-width="3.8"/>
<path d="M219 55.5L224.5 50" stroke="#40e040" stroke-width="2.2"/>
<path d="M227.5 46.5L220.5 48L226 53.5Z" fill="#40e040" stroke-width="0.9"/>
<rect x="257.5" y="40.5" width="13.5" height="13.5" fill="#a8d0f4" stroke-width="1.2"/>
<rect x="253.2" y="44.8" width="13.5" height="13" fill="#b4d8f8" stroke-width="1.2"/>
</g>
<rect x="257.5" y="45.5" width="9" height="8.5" fill="none" stroke="#000" stroke-width="1" stroke-dasharray="1.2 1.2"/>
<path d="M237.5 47.5H245.5L241.5 51.5Z M276.5 47.5H284.5L280.5 51.5Z M409.5 47.5H417.5L413.5 51.5Z" fill="#000"/>
<g stroke="#000" stroke-linejoin="round" stroke-width="1.1">
 <!-- chamfer -->
 <path d="M297.3 44.9L297.3 58.6L311.1 58.6Z" fill="#8ec6f4" stroke="none"/>
 <path d="M297.3 44.9L302.8 39.5L316.7 53L311.1 58.6Z" fill="#b2d8f8" stroke="none"/>
 <path d="M297.3 58.6V44.9L302.8 39.5L316.7 53L311.1 58.6H297.3L311.1 58.6 M297.3 44.9L311.1 58.6" fill="none"/>
 <path d="M302.8 39.5H316.7V53 M297.3 44.9H311.1V58.6 M311.1 44.9L316.7 39.5" fill="none" stroke-dasharray="1.5 1" stroke-width="1"/>
 <!-- fillet -->
 <path d="M323 44.9H331Q336.9 46 336.9 58.6H323Z" fill="#8ec6f4" stroke="none"/>
 <path d="M323 44.9L328.5 39.5H336Q342.5 40 342.5 47V53L336.9 58.6Q336.9 46 331 44.9Z" fill="#b2d8f8" stroke="none"/>
 <path d="M323 58.6V44.9L328.5 39.5H336Q342.5 40 342.5 47V53L336.9 58.6H323 M323 44.9H331Q336.9 46 336.9 58.6" fill="none"/>
 <path d="M331 44.9H336.9V58.6 M336.9 44.9L342.5 39.5 M336 39.5H342.5V47" fill="none" stroke-dasharray="1.5 1" stroke-width="1"/>
 <!-- shell -->
 <path d="M350.5 44.9L356 39.5H369.5L364 44.9Z" fill="#cfe6fb"/>
 <path d="M350.5 58.6L356 53H369.5L364 58.6Z" fill="#8ec6f4"/>
 <path d="M350.5 44.9V58.6 M364 44.9V58.6 M369.5 39.5V53 M350.5 51.5H364L369.5 46" fill="none" stroke-dasharray="1.5 1" stroke-width="1"/>
 <!-- open box -->
 <path d="M387 44.5L392.5 39.3H403L397.5 44.5Z" fill="#c6e2fa"/>
 <path d="M387.1 49.6L392 45.2H402.4V53.5L397.3 58.5H387.1Z" fill="#7a8a9a"/>
 <path d="M387.1 49.6H397.3V58.5H387.1Z" fill="#8ec6f4"/>
 <path d="M397.3 49.6L402.4 45.2V53.5L397.3 58.5Z" fill="#a6d4f8"/>
</g>
<!-- gray icon -->
<g stroke="#8a8e98" stroke-width="1.1" fill="#d4d6de" stroke-linejoin="round">
 <path d="M422.5 46L428 40H439L433.5 46Z" fill="#e0e2e8"/>
 <path d="M422.5 58.5L428 53H439L433.5 58.5Z"/>
 <path d="M423 46V57 M439.5 41V52.5"/>
 <rect x="426" y="47" width="8" height="8" fill="#dadce2"/>
 <rect x="427" y="44" width="3" height="2.5" fill="#fff"/>
</g>

<!-- project tree toolbar -->
<rect x="787.5" y="43" width="6" height="9" fill="#f4e070" stroke="#000" stroke-width="1.2"/>
<path d="M789 45.5H791.5V48" fill="none" stroke="#000" stroke-width="0.8"/>
<path d="M785 50L789 48L792 50.5L791.5 54.5L787 56L783.5 53.5Z" fill="#f08a50" stroke="#6a3010" stroke-width="0.8"/>
<circle cx="781.6" cy="48" r="4.6" fill="url(#gsph)" stroke="#1a5a1a" stroke-width="0.6"/>
<path d="M799.5 47.5H807.5L803.5 51.5Z M846.5 47.5H854.5L850.5 51.5Z" fill="#000"/>
<path d="M823.5 55V41M821.5 43.5L823.5 40.5L825.5 43.5" fill="none" stroke="#2a4a8a" stroke-width="1.2"/>
<path d="M826.5 40V54.5M824.5 52L826.5 55L828.5 52" fill="none" stroke="#7a90b8" stroke-width="1.1"/>
<text x="829.5" y="46.5" font-family="Liberation Serif" font-weight="bold" font-size="8" fill="#d02020">A</text>
<text x="829.8" y="55.5" font-family="Liberation Serif" font-weight="bold" font-size="8" fill="#6a80b0">Z</text>
<rect x="838.5" y="39.5" width="3" height="3" fill="none" stroke="#6a90c8" stroke-width="1"/>
<rect x="838.5" y="44.5" width="3" height="3" fill="none" stroke="#6a90c8" stroke-width="1"/>
<rect x="838.5" y="49.5" width="3" height="3" fill="none" stroke="#e02020" stroke-width="1.2"/>
<rect x="838.5" y="54.5" width="3" height="3" fill="none" stroke="#e02020" stroke-width="1.2"/>
<!-- collapse (gray) -->
<g opacity="0.45">
<rect x="869.5" y="41.5" width="5" height="5" rx="1" fill="#fff" stroke="#7a7a8a" stroke-width="1.2"/>
<path d="M870.5 44H873.5M872 42.5V45.5" stroke="#333" stroke-width="0.9"/>
<path d="M877 43H881 M877 54H880" stroke="#333" stroke-width="1"/>
<path d="M877 45.5H880M881 45.5H884 M877 47.5H880M881 47.5H884 M877 49.5H880M881 49.5H884 M877 51.5H880M881 51.5H884 M877 56H880M881 56H884" stroke="#889" stroke-width="0.8"/>
</g>
<g>
<rect x="895.5" y="41.5" width="5" height="5" rx="1" fill="#fff" stroke="#4a8ad0" stroke-width="1.2"/>
<rect x="895.5" y="50.5" width="5" height="5" rx="1" fill="#fff" stroke="#4a8ad0" stroke-width="1.2"/>
<path d="M896.5 44H899.5M898 42.5V45.5 M896.5 53H899.5M898 51.5V54.5" stroke="#000" stroke-width="0.9"/>
<path d="M903 43H907 M903 53H907" stroke="#333" stroke-width="1"/>
<path d="M903 45.5H906M907 45.5H910 M903 47.5H906M907 47.5H910 M903 49.5H906M907 49.5H910 M903 55.5H906M907 55.5H910" stroke="#9ab" stroke-width="0.8"/>
</g>
<!-- search -->
<circle cx="784" cy="75.2" r="4.4" fill="#dde8f4" stroke="#1a1a1a" stroke-width="1.3"/>
<path d="M781 78.5L775.5 84" stroke="#111" stroke-width="1.8" stroke-linecap="round"/>
<path d="M911 76L915.5 80.5L920 76" fill="none" stroke="#333" stroke-width="1.1"/>

<!-- tree icons -->
<g stroke="#000" stroke-linejoin="round">
 <path d="M789.5 95.5L791 93.5H795L796.5 95.5H804.5V107.8H789.5Z" fill="#f6dc7a" stroke-width="1.1"/>
 <path d="M791.5 106L796 98.5H803.5Q804 103 800 108Z" fill="#a8d0f6" stroke-width="1"/>
 <path d="M805.5 121L812.5 114.5L820 118.6L815.6 126.5Q812 122 805.5 121Z" fill="#88b8e8" stroke-width="1.1"/>
 <path d="M809 117.5L817.5 123 M813 114.8L813.5 124" stroke="#5a7aa0" stroke-width="0.5"/>
 <path d="M821.5 140L828.5 133.5L836 137.6L831.6 145.5Q828 141 821.5 140Z" fill="#88b8e8" stroke-width="1.1"/>
 <path d="M825 136.5L833.5 142 M829 133.8L829.5 143" stroke="#5a7aa0" stroke-width="0.5"/>
 <path d="M821.5 159L828.5 152.5L836 156.6L831.6 164.5Q828 160 821.5 159Z" fill="#e4ecf4" stroke="#c0c8d0" stroke-width="1"/>
 <!-- groups -->
 <rect x="790.5" y="171.5" width="6" height="6.5" fill="#5ae05a" stroke-width="1"/>
 <rect x="797" y="174" width="6.5" height="7" fill="#9cc8f0" stroke-width="1"/>
 <rect x="793.2" y="177" width="6.5" height="6.5" fill="#f49050" stroke-width="1"/>
 <!-- models -->
 <path d="M789.5 190L791 188.5H795L796.5 190.5H804.5V203.5H789.5Z" fill="#f8e490" stroke-width="1.1"/>
 <path d="M793 196.5V201H798" fill="none" stroke="#8a8a8a" stroke-width="1.6"/>
 <rect x="796.5" y="193" width="5" height="5" fill="#f08040" stroke-width="0.9"/>
 <path d="M789.5 209L791 207.5H795L796.5 209.5H804.5V222.5H789.5Z" fill="#f0f0f0" stroke-width="1.1"/>
 <path d="M793 215.5V220H798" fill="none" stroke="#8a8a8a" stroke-width="1.6"/>
 <rect x="796.5" y="212" width="5" height="5" fill="#40d040" stroke-width="0.9"/>
 <!-- tasks -->
 <path d="M789.5 228L791 226.5H795L796.5 228.5H804.5V239.5H789.5Z" fill="#f8e490" stroke-width="1.1"/>
 <path d="M794.5 233V241.5L801.5 237Z" fill="#40d040" stroke="#1a6a1a" stroke-width="0.8"/>
 <!-- task 1 -->
 <path d="M809.5 246.5L819.5 250L811.5 254Z" fill="#50d050" stroke="#1a6a1a" stroke-width="0.8"/>
 <circle cx="811.3" cy="254" r="4.2" fill="none" stroke="#f06a20" stroke-width="2.4"/>
 <circle cx="811.3" cy="254" r="5.2" fill="none" stroke="#f06a20" stroke-width="1.4" stroke-dasharray="1.6 1.4"/>
 <circle cx="811.3" cy="254" r="1.6" fill="#40d040" stroke="none"/>
 <!-- environment -->
 <path d="M821.5 268.5L826 264.5H836.5V275L832 279H821.5Z" fill="#c4def6" stroke="#3a5a8a" stroke-width="1"/>
 <path d="M821.5 268.5H832V279 M832 268.5L836.5 264.5" fill="none" stroke="#3a5a8a" stroke-width="0.8"/>
 <path d="M829 266.5V274M826.5 276.5L829 274L834 272" fill="none" stroke="#000" stroke-width="1.2"/>
</g>

<!-- spin -->
<rect x="175" y="635" width="1" height="20" fill="#fafafa"/>
<path d="M180 644L183.4 640.5L186.8 644 M180 649.5L183.4 653L186.8 649.5" fill="none" stroke="#a8a8a8" stroke-width="1.6"/>
<!-- row1 -->
<g transform="translate(28,68)">
 <path d="M6 9 L10 6 L17 6 L20 9 L20 16 L16 19 L9 19 L6 16 Z" fill="url(#lb)" stroke="#000" stroke-width="1"/>
 <path d="M11 9H17V15H11Z" fill="none" stroke="#000" stroke-width="0.9"/>
 <path d="M17 9L19.5 7" stroke="#000" stroke-width="0.8"/>
 <path d="M0.5 2.5L1.5 1H6L7 2.5H13V5H0.5Z" fill="#f4d470" stroke="#000" stroke-width="1"/>
 <path d="M0.5 9.5L2.5 5H15L12.5 9.5Z" fill="#fbe69a" stroke="#000" stroke-width="1"/>
</g>
<use href="#s3" x="64" y="77"/>
<g fill="none" stroke-linecap="round">
 <path d="M84 82.7L96.7 70.7" stroke="#0a300a" stroke-width="3.4"/><path d="M84 82.7L96.7 70.7" stroke="#3ad03a" stroke-width="1.8"/>
 <path d="M108 84L108 73L114 68L118 79L124 74" stroke="#0a300a" stroke-width="3.4"/><path d="M108 84L108 73L114 68L118 79L124 74" stroke="#3ad03a" stroke-width="1.8"/>
 <path d="M134 84C136 76 140 76 144 76S149 74 150 70" stroke="#0a300a" stroke-width="3.4"/><path d="M134 84C136 76 140 76 144 76S149 74 150 70" stroke="#3ad03a" stroke-width="1.8"/>
 <path d="M160 84C160 79 162 77 168 77S174 75 175 70" stroke="#0a300a" stroke-width="3.4"/><path d="M160 84C160 79 162 77 168 77S174 75 175 70" stroke="#3ad03a" stroke-width="1.8"/>
</g>
<use href="#s3" x="84" y="82.7"/><use href="#s3" x="96.7" y="70.7"/>
<use href="#s3" x="108" y="84"/><use href="#s3" x="108" y="73"/><use href="#s3" x="114" y="68"/><use href="#s3" x="117.5" y="78.5"/><use href="#s3" x="123.5" y="74"/>
<use href="#s3" x="134" y="84"/><use href="#s3" x="150" y="70"/>
<use href="#s3" x="160" y="84"/><use href="#s3" x="168" y="77"/><use href="#s3" x="175" y="69.5"/>
<!-- row2 -->
<g fill="none" stroke-linecap="round">
 <path d="M30.7 114.7C30.7 108 33 107 37.8 106.9S44 105 45.3 100.5" stroke="#0a300a" stroke-width="3.4"/><path d="M30.7 114.7C30.7 108 33 107 37.8 106.9S44 105 45.3 100.5" stroke="#3ad03a" stroke-width="1.8"/>
 <path d="M37 113.5H46" stroke="#102050" stroke-width="1" stroke-dasharray="2 1.5"/>
</g>
<path d="M34 113.5L37 111.5V115.5Z M49 113.5L46 111.5V115.5Z" fill="#102050"/>
<use href="#s3" x="30.7" y="114.7"/><use href="#s3" x="37.8" y="106.9"/><use href="#s3" x="45.3" y="100.5"/>
<rect x="55" y="101" width="18" height="14" fill="none" stroke="#0a300a" stroke-width="3.6"/>
<rect x="55" y="101" width="18" height="14" fill="none" stroke="#3ad03a" stroke-width="2"/>
<rect x="57.5" y="103.5" width="13" height="9" fill="#fff" opacity="0.5"/>
<circle cx="89.9" cy="108" r="8.3" fill="none" stroke="#0a300a" stroke-width="3.6"/><circle cx="89.9" cy="108" r="8.3" fill="none" stroke="#3ad03a" stroke-width="2"/>
<path d="M88 106L92 110M92 106L88 110" stroke="#888" stroke-width="0.8"/>
<ellipse cx="115.9" cy="107.8" rx="8.2" ry="6.2" fill="none" stroke="#0a300a" stroke-width="3.6"/><ellipse cx="115.9" cy="107.8" rx="8.2" ry="6.2" fill="none" stroke="#3ad03a" stroke-width="2"/>
<path d="M114 106L118 110M118 106L114 110" stroke="#888" stroke-width="0.8"/>
<path d="M148.9 107.8A7 6.5 0 1 0 142 114.2" fill="none" stroke="#0a300a" stroke-width="3.4"/><path d="M148.9 107.8A7 6.5 0 1 0 142 114.2" fill="none" stroke="#3ad03a" stroke-width="1.8"/>
<path d="M140 106L144 110M144 106L140 110" stroke="#888" stroke-width="0.8"/>
<use href="#s3" x="148.9" y="107.8"/><use href="#s3" x="142" y="114.2"/>
<path d="M175.5 107.8A7 6.5 0 0 0 163 102.6 M163 102.6A7 7 0 0 0 168 114" fill="none" stroke="#0a300a" stroke-width="3.4"/><path d="M175.5 107.8A7 6.5 0 0 0 163 102.6 M163 102.6A7 7 0 0 0 168 114" fill="none" stroke="#3ad03a" stroke-width="1.8"/>
<use href="#s3" x="163" y="102.6"/><use href="#s3" x="175.5" y="107.8"/><use href="#s3" x="168" y="114"/>
<!-- row3 -->
<path d="M37.8 130L45.5 134.5V143.5L37.8 148L30 143.5V134.5Z" fill="none" stroke="#0a300a" stroke-width="3.6"/><path d="M37.8 130L45.5 134.5V143.5L37.8 148L30 143.5V134.5Z" fill="none" stroke="#3ad03a" stroke-width="2"/>
<g fill="none" stroke-width="1.6">
 <ellipse cx="61" cy="141" rx="4" ry="3" transform="rotate(-40 61 141)" stroke="#0a300a" stroke-width="3"/><ellipse cx="61" cy="141" rx="4" ry="3" transform="rotate(-40 61 141)" stroke="#3ad03a"/>
 <ellipse cx="65" cy="137" rx="4" ry="3" transform="rotate(-40 65 137)" stroke="#0a300a" stroke-width="3"/><ellipse cx="65" cy="137" rx="4" ry="3" transform="rotate(-40 65 137)" stroke="#3ad03a"/>
 <ellipse cx="86" cy="140" rx="6" ry="3" transform="rotate(-30 86 140)" stroke="#0a300a" stroke-width="3"/><ellipse cx="86" cy="140" rx="6" ry="3" transform="rotate(-30 86 140)" stroke="#3ad03a"/>
 <ellipse cx="91" cy="137" rx="6" ry="3" transform="rotate(-30 91 137)" stroke="#0a300a" stroke-width="3"/><ellipse cx="91" cy="137" rx="6" ry="3" transform="rotate(-30 91 137)" stroke="#3ad03a"/>
</g>
<use href="#s3" x="57" y="145"/><use href="#s3" x="69.5" y="131.5"/>
<use href="#s3" x="83" y="145"/><use href="#s3" x="97" y="131.5"/>
<g fill="none" stroke-linejoin="round">
 <path d="M115.5 128.5H125V136.5H115.5Z" stroke="#0a300a" stroke-width="3"/><path d="M115.5 128.5H125V136.5H115.5Z" stroke="#3ad03a" stroke-width="1.3"/>
 <path d="M112.5 131.5H122V139.5H112.5Z" fill="#d8e8d8" stroke="#0a300a" stroke-width="3"/><path d="M112.5 131.5H122V139.5H112.5Z" stroke="#3ad03a" stroke-width="1.3"/>
 <path d="M109.5 134.5H119V142.5H109.5Z" fill="#e4ece4" stroke="#0a300a" stroke-width="3"/><path d="M109.5 134.5H119V142.5H109.5Z" stroke="#3ad03a" stroke-width="1.3"/>
 <path d="M112 141L117 136" stroke="#555" stroke-width="0.9"/>
</g>
<use href="#s3" x="108.5" y="145"/><use href="#s3" x="125" y="129"/>
<path d="M136 143Q139 136 142 139T148 132" stroke="#0a300a" stroke-width="3.2" fill="none"/><path d="M136 143Q139 136 142 139T148 132" stroke="#3ad03a" stroke-width="1.6" fill="none"/>
<path d="M136 140Q141 142 142 138T148 135" stroke="#0a300a" stroke-width="2.4" fill="none"/><path d="M136 140Q141 142 142 138T148 135" stroke="#3ad03a" stroke-width="1.1" fill="none"/>
<use href="#s3" x="134.5" y="144"/><use href="#s3" x="139" y="146"/><use href="#s3" x="148" y="131"/><use href="#s3" x="150" y="134"/>
<path d="M166.2 136.7 L166.3 136.5 L166.5 136.3 L166.8 136.2 L167.0 136.0 L167.3 135.9 L167.6 135.8 L167.9 135.8 L168.2 135.8 L168.6 135.8 L168.9 135.9 L169.3 136.0 L169.6 136.1 L169.9 136.3 L170.2 136.6 L170.5 136.8 L170.7 137.2 L170.9 137.5 L171.1 137.9 L171.2 138.3 L171.3 138.7 L171.3 139.2 L171.3 139.6 L171.2 140.1 L171.1 140.5 L170.9 141.0 L170.6 141.4 L170.4 141.8 L170.0 142.2 L169.6 142.5 L169.2 142.8 L168.7 143.0 L168.2 143.2 L167.6 143.3 L167.1 143.4 L166.5 143.4 L165.9 143.3 L165.4 143.2 L164.8 143.0 L164.3 142.7 L163.7 142.4 L163.3 142.0 L162.8 141.5 L162.4 141.0 L162.1 140.4 L161.9 139.8 L161.7 139.2 L161.5 138.5 L161.5 137.8 L161.5 137.2 L161.6 136.5 L161.8 135.8 L162.1 135.1 L162.5 134.5 L162.9 133.9 L163.4 133.3 L164.0 132.8 L164.6 132.4 L165.3 132.0 L166.1 131.7 L166.8 131.5 L167.6 131.4 L168.4 131.4 L169.3 131.5 L170.1 131.6 L170.9 131.9 L171.6 132.3 L172.4 132.7 L173.1 133.3 L173.7 133.9 L174.2 134.6 L174.7 135.3 L175.1 136.1 L175.4 137.0 L175.6 137.9 L175.7 138.8 L175.7 139.8 L175.6 140.7 L175.3 141.7 L175.0 142.6 L174.5 143.4" fill="none" stroke="#0a300a" stroke-width="3.6" stroke-linecap="round"/>
<path d="M166.2 136.7 L166.3 136.5 L166.5 136.3 L166.8 136.2 L167.0 136.0 L167.3 135.9 L167.6 135.8 L167.9 135.8 L168.2 135.8 L168.6 135.8 L168.9 135.9 L169.3 136.0 L169.6 136.1 L169.9 136.3 L170.2 136.6 L170.5 136.8 L170.7 137.2 L170.9 137.5 L171.1 137.9 L171.2 138.3 L171.3 138.7 L171.3 139.2 L171.3 139.6 L171.2 140.1 L171.1 140.5 L170.9 141.0 L170.6 141.4 L170.4 141.8 L170.0 142.2 L169.6 142.5 L169.2 142.8 L168.7 143.0 L168.2 143.2 L167.6 143.3 L167.1 143.4 L166.5 143.4 L165.9 143.3 L165.4 143.2 L164.8 143.0 L164.3 142.7 L163.7 142.4 L163.3 142.0 L162.8 141.5 L162.4 141.0 L162.1 140.4 L161.9 139.8 L161.7 139.2 L161.5 138.5 L161.5 137.8 L161.5 137.2 L161.6 136.5 L161.8 135.8 L162.1 135.1 L162.5 134.5 L162.9 133.9 L163.4 133.3 L164.0 132.8 L164.6 132.4 L165.3 132.0 L166.1 131.7 L166.8 131.5 L167.6 131.4 L168.4 131.4 L169.3 131.5 L170.1 131.6 L170.9 131.9 L171.6 132.3 L172.4 132.7 L173.1 133.3 L173.7 133.9 L174.2 134.6 L174.7 135.3 L175.1 136.1 L175.4 137.0 L175.6 137.9 L175.7 138.8 L175.7 139.8 L175.6 140.7 L175.3 141.7 L175.0 142.6 L174.5 143.4" fill="none" stroke="#3ad03a" stroke-width="2" stroke-linecap="round"/>
</svg>

</body></html>
